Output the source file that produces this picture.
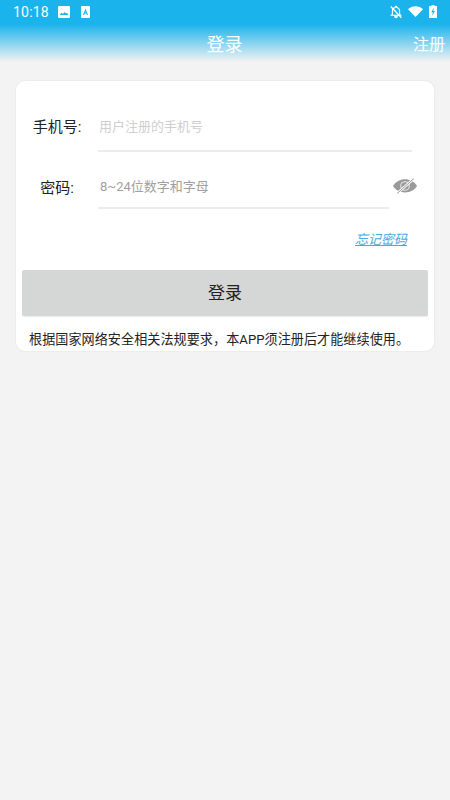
<template>
  <div class="page">
    <header class="header">
      <div class="status">
        <span class="time">10:18</span>
        <svg class="note" viewBox="0 0 12 12" width="12" height="12"><rect width="12" height="12" rx="1.2" fill="#fff"/><path d="M1.500 9 3.500 6.800 5 8l1.500-2 1.500 1.500L9 6.700 10.500 9z" fill="#1ab3ec"/></svg>
        <svg class="note second" viewBox="0 0 9 12" width="9" height="12"><rect width="9" height="12" rx="1" fill="#fff"/><path d="M4.500 2.400 7 9H5.800L5.300 7.600H3.700L3.200 9H2zM4.100 6.500h.8L4.500 5.200z" fill="#1ab3ec"/></svg>
        <span class="spacer"></span>
        <svg class="bell" viewBox="0 0 14 14" width="14" height="14"><path d="M7 1.200c.5 0 .8.3.8.8v.5c1.700.4 2.800 1.800 2.800 3.600v2.900l1.100 1.300H2.300l1.100-1.300V6.100c0-1.800 1.100-3.200 2.800-3.600V2c0-.5.3-.8.8-.8zM5.800 11.400h2.400c0 .7-.5 1.200-1.200 1.200s-1.200-.5-1.200-1.200z" fill="none" stroke="#fff" stroke-width="1.100"/><path d="M1.800 1.500 12.400 12.800" stroke="#fff" stroke-width="1.300"/></svg>
        <svg class="wifi" viewBox="0 0 15 11" width="15" height="11"><path d="M0 3.200C4-.9 11-.9 15 3.200L7.500 11z" fill="#fff"/></svg>
        <svg class="battery" viewBox="0 0 8 13" width="8" height="13"><path d="M2.500 0h3v1H7.500a.5.5 0 0 1 .5.500V12.500a.5.5 0 0 1-.5.500H.5a.5.5 0 0 1-.5-.500V1.500A.5.5 0 0 1 .5 1h2z" fill="#fff"/><path d="M4.800 2.500 2.300 7.200h1.500L3.200 11 5.800 6H4.300z" fill="#1ab3ec"/></svg>
      </div>
      <div class="titlebar">
        <span class="title">登录</span>
        <span class="register">注册</span>
      </div>
    </header>

    <main class="card">
      <div class="row first">
        <label class="label">手机号:</label>
        <div class="field"><span class="placeholder light">用户注册的手机号</span></div>
      </div>
      <div class="row second-row">
        <label class="label">密码:</label>
        <div class="field"><span class="placeholder dark">8~24位数字和字母</span></div>
        <svg class="eye" viewBox="0 0 24 16" width="24" height="16">
          <path d="M0 8C5-1 19-1 24 8 19 16.500 5 16.500 0 8z" fill="#9a9a9a"/>
          <circle cx="12" cy="8" r="4.300" fill="none" stroke="#e4e4e4" stroke-width="1.100"/>
          <path d="M4 15.500 21 .5" stroke="#fff" stroke-width="2.400"/>
          <path d="M4 15.500 21 .5" stroke="#9a9a9a" stroke-width="1"/>
        </svg>
      </div>
      <div class="forgot-wrap"><a class="forgot">忘记密码</a></div>
      <button class="login">登录</button>
      <p class="notice">根据国家网络安全相关法规要求，本APP须注册后才能继续使用。</p>
    </main>
  </div>
</template>

<style>
html, body { margin: 0; background: #f3f3f3; }
</style>

<style scoped>
.page {
  width: 450px;
  height: 800px;
  background: #f3f3f3;
  font-family: Roboto, "Noto Sans CJK SC", sans-serif;
  overflow: hidden;
}
.header {
  height: 62px;
  background: linear-gradient(to bottom, #1ab3ec 0, #1ab3ec 24px, #f3f3f3 62px);
  color: #fff;
}
.status {
  height: 24px;
  display: flex;
  align-items: center;
  padding: 0 13px 0 13px;
}
.time {
  font-size: 14px;
  letter-spacing: 0.2px;
  width: 45px;
}
.note { margin-left: 0; }
.note.second { margin-left: 11px; }
.spacer { flex: 1; }
.bell { margin-right: 5px; }
.wifi { margin-right: 6px; margin-top: -1px; }
.battery { margin-top: -1px; }
.titlebar {
  display: flex;
  justify-content: center;
  position: relative;
  height: 38px;
  line-height: 41px;
}
.title { font-size: 18px; margin-left: -1px; }
.register {
  position: absolute;
  right: 5px;
  top: 0;
  font-size: 16px;
}
.card {
  margin: 19px 16px 0;
  height: 270px;
  box-sizing: border-box;
  background: #fff;
  border-radius: 9px;
  box-shadow: 0 0 2px rgba(0, 0, 0, 0.1);
  padding: 0 6px;
  display: flex;
  flex-direction: column;
}
.row {
  display: flex;
  align-items: stretch;
  position: relative;
}
.row.first { margin-top: 26px; height: 45px; }
.row.second-row { margin-top: 16px; height: 41px; }
.label {
  width: 70px;
  box-sizing: border-box;
  padding-top: 9px;
  text-align: center;
  font-size: 15px;
  line-height: 22px;
  color: #222;
  flex: none;
}
.field {
  margin-left: 6px;
  border-bottom: 2px solid #ececec;
  box-sizing: border-box;
}
.first .field { width: 314px; }
.second-row .field { width: 291px; }
.placeholder {
  display: block;
  padding: 10px 0 0 1px;
  font-size: 13px;
  line-height: 20px;
}
.placeholder.light { color: #cfcfcf; }
.placeholder.dark { color: #a0a0a0; padding-top: 9px; padding-left: 2px; }
.eye {
  position: absolute;
  left: 371px;
  top: 10px;
}
.forgot-wrap {
  display: flex;
  justify-content: flex-end;
  padding: 21px 21px 0 0;
  height: 40px;
  box-sizing: border-box;
}
.forgot {
  font-size: 13px;
  font-style: italic;
  line-height: 20px;
  height: 19px;
  color: #4ba9dd;
  text-decoration: underline;
}
.login {
  display: block;
  margin: 21px 0 0 0;
  width: 406px;
  height: 46px;
  border: 0;
  border-radius: 2px;
  background: #d5d7d6;
  box-shadow: 0 1px 1px rgba(0, 0, 0, 0.08);
  color: #222;
  font-family: inherit;
  font-size: 17px;
  padding: 0 0 4px;
}
.notice {
  margin: 14px 0 0 7px;
  font-size: 13.100px;
  letter-spacing: 0.05px;
  line-height: 20px;
  color: #222;
  white-space: nowrap;
}
</style>
